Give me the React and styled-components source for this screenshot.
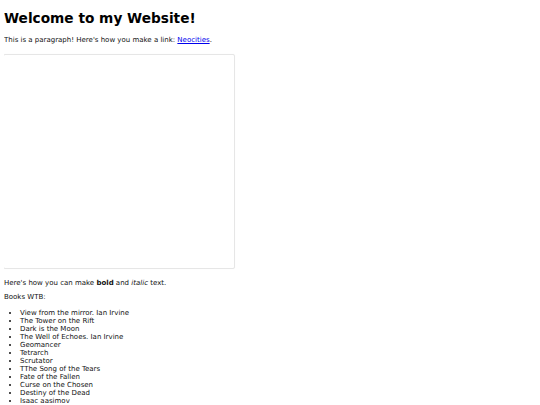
import React from 'react';
import styled, { createGlobalStyle } from 'styled-components';

const GlobalStyle = createGlobalStyle`
  body {
    margin: 4px;
    background: #fff;
    color: #111;
    font-family: "DejaVu Sans", Verdana, sans-serif;
    font-size: 7px;
    line-height: 8px;
  }
`;

const Heading = styled.h1`
  font-size: 13.7px;
  line-height: 16px;
  font-weight: bold;
  color: #000;
  margin: 6px 0 10px;
`;

const Text = styled.p`
  margin: 6px 0;
`;

const Link = styled.a`
  color: #0000ee;
  text-decoration: underline;
`;

const Frame = styled.div`
  width: 230px;
  height: 213px;
  margin: 10px 0 10px -1px;
  border: 1px solid #e6e6e6;
  border-radius: 2px;
  box-shadow: 0 0 1px rgba(0, 0, 0, 0.06);
`;

const BookList = styled.ul`
  margin: 8px 0;
  padding-left: 16px;
  list-style: disc;
`;

const Book = styled.li`
  line-height: 8px;
`;

const books = [
  'View from the mirror. Ian Irvine',
  'The Tower on the Rift',
  'Dark is the Moon',
  'The Well of Echoes. Ian Irvine',
  'Geomancer',
  'Tetrarch',
  'Scrutator',
  'TThe Song of the Tears',
  'Fate of the Fallen',
  'Curse on the Chosen',
  'Destiny of the Dead',
  'Isaac aasimov',
];

export default function App() {
  return (
    <>
      <GlobalStyle />
      <Heading>Welcome to my Website!</Heading>
      <Text>
        This is a paragraph! Here's how you make a link: <Link href="#">Neocities</Link>.
      </Text>
      <Frame />
      <Text>
        Here's how you can make <strong>bold</strong> and <em>italic</em> text.
      </Text>
      <Text>Books WTB:</Text>
      <BookList>
        {books.map((b) => (
          <Book key={b}>{b}</Book>
        ))}
      </BookList>
    </>
  );
}
